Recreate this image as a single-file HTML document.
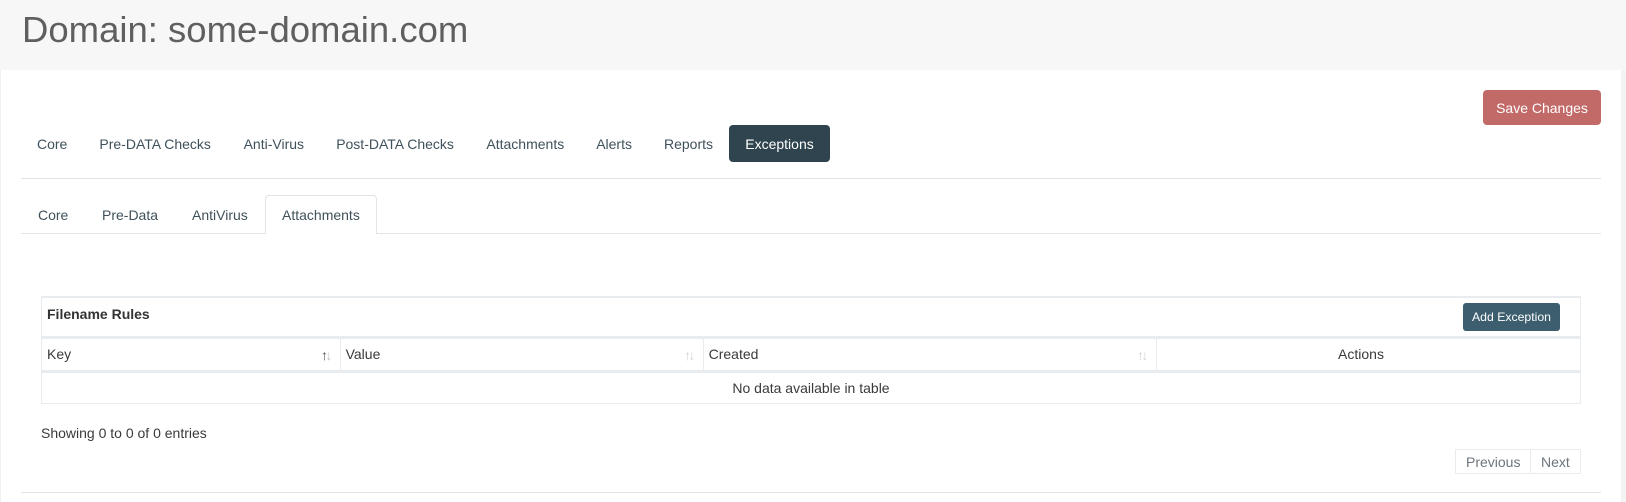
<!DOCTYPE html>
<html><head><meta charset="utf-8"><style>
html,body{margin:0;padding:0;width:1626px;height:502px;overflow:hidden;background:#fff}
body{position:relative;font-family:"Liberation Sans",sans-serif;font-size:14px;color:#333}
.a{position:absolute;white-space:nowrap}
.n{top:134px;height:20px;line-height:20px;font-size:14px;color:#3f515b}
.s{top:205px;height:20px;line-height:20px;font-size:14px;color:#3f515b}
.t{font-size:14px;color:#3a3a3a;line-height:20px;height:20px}
.b{position:absolute;background:#e9ecef}
.l{position:absolute;background:#e3e3e3}
.r{font-size:14px;line-height:18px;letter-spacing:-2.6px}
</style></head><body>
<div class="a" style="left:0;top:0;width:1626px;height:70px;background:#f7f7f7"></div>
<div class="a" style="left:0;top:70px;width:1px;height:432px;background:#f1f1f1"></div>
<div class="a" style="left:1621px;top:70px;width:5px;height:432px;background:#f3f3f3"></div>
<div class="a" style="left:22px;top:8px;font-size:36.5px;line-height:44px;color:#5f5f5f">Domain: some-domain.com</div>

<div class="a" style="left:1483px;top:90px;width:118px;height:35px;line-height:36px;background:#c26a68;border-radius:4px;color:#fff;text-align:center;font-size:14px">Save Changes</div>

<div class="a n" style="left:37px">Core</div>
<div class="a n" style="left:99.4px">Pre-DATA Checks</div>
<div class="a n" style="left:243.6px">Anti-Virus</div>
<div class="a n" style="left:336.2px">Post-DATA Checks</div>
<div class="a n" style="left:486.4px">Attachments</div>
<div class="a n" style="left:596.2px">Alerts</div>
<div class="a n" style="left:664px">Reports</div>
<div class="a" style="left:729px;top:125px;width:101px;height:37px;line-height:38px;background:#2f444e;border-radius:4px;color:#fff;text-align:center;font-size:14px">Exceptions</div>
<div class="l" style="left:21px;top:178px;width:1580px;height:1px"></div>

<div class="a s" style="left:38px">Core</div>
<div class="a s" style="left:102px">Pre-Data</div>
<div class="a s" style="left:192px">AntiVirus</div>
<div class="a" style="left:265px;top:195px;width:112px;height:39px;box-sizing:border-box;border:1px solid #e3e3e3;border-bottom:0;border-radius:4px 4px 0 0;background:#fff;z-index:2"></div>
<div class="a s" style="left:282px;z-index:3">Attachments</div>
<div class="l" style="left:21px;top:233px;width:1580px;height:1px"></div>

<div class="b" style="left:41px;top:296px;width:1540px;height:2px"></div>
<div class="b" style="left:41px;top:336px;width:1540px;height:3px"></div>
<div class="b" style="left:41px;top:370px;width:1540px;height:3px"></div>
<div class="b" style="left:41px;top:403px;width:1540px;height:1px"></div>
<div class="b" style="left:41px;top:296px;width:1px;height:108px"></div>
<div class="b" style="left:1580px;top:296px;width:1px;height:108px"></div>
<div class="b" style="left:340px;top:339px;width:1px;height:31px"></div>
<div class="b" style="left:703px;top:339px;width:1px;height:31px"></div>
<div class="b" style="left:1156px;top:339px;width:1px;height:31px"></div>

<div class="a" style="left:47px;top:304px;font-size:14px;line-height:20px;font-weight:bold;color:#333">Filename Rules</div>
<div class="a" style="left:1463px;top:303px;width:97px;height:28px;line-height:29px;background:#3c5e6f;border-radius:3px;color:#fff;text-align:center;font-size:12.25px">Add Exception</div>

<div class="a t" style="left:47px;top:344px">Key</div>
<div class="a t" style="left:345.6px;top:344px">Value</div>
<div class="a t" style="left:708.6px;top:344px">Created</div>
<div class="a t" style="left:1156px;top:344px;width:410px;text-align:center">Actions</div>
<div class="a r" style="left:321px;top:346px;color:#555">↑<span style="color:#c4c4c4">↓</span></div>
<div class="a r" style="left:684px;top:346px;color:#d5d5d5">↑↓</div>
<div class="a r" style="left:1137px;top:346px;color:#d5d5d5">↑↓</div>

<div class="a t" style="left:41px;top:378px;width:1540px;text-align:center">No data available in table</div>
<div class="a t" style="left:41px;top:423px">Showing 0 to 0 of 0 entries</div>

<div class="a" style="left:1455px;top:449px;width:126px;height:25px;box-sizing:border-box;border:1px solid #e9ecef"></div>
<div class="b" style="left:1530px;top:449px;width:1px;height:25px"></div>
<div class="a t" style="left:1466px;top:452px;color:#6c757d">Previous</div>
<div class="a t" style="left:1541px;top:452px;color:#6c757d">Next</div>
<div class="l" style="left:21px;top:492px;width:1580px;height:1px"></div>
</body></html>
